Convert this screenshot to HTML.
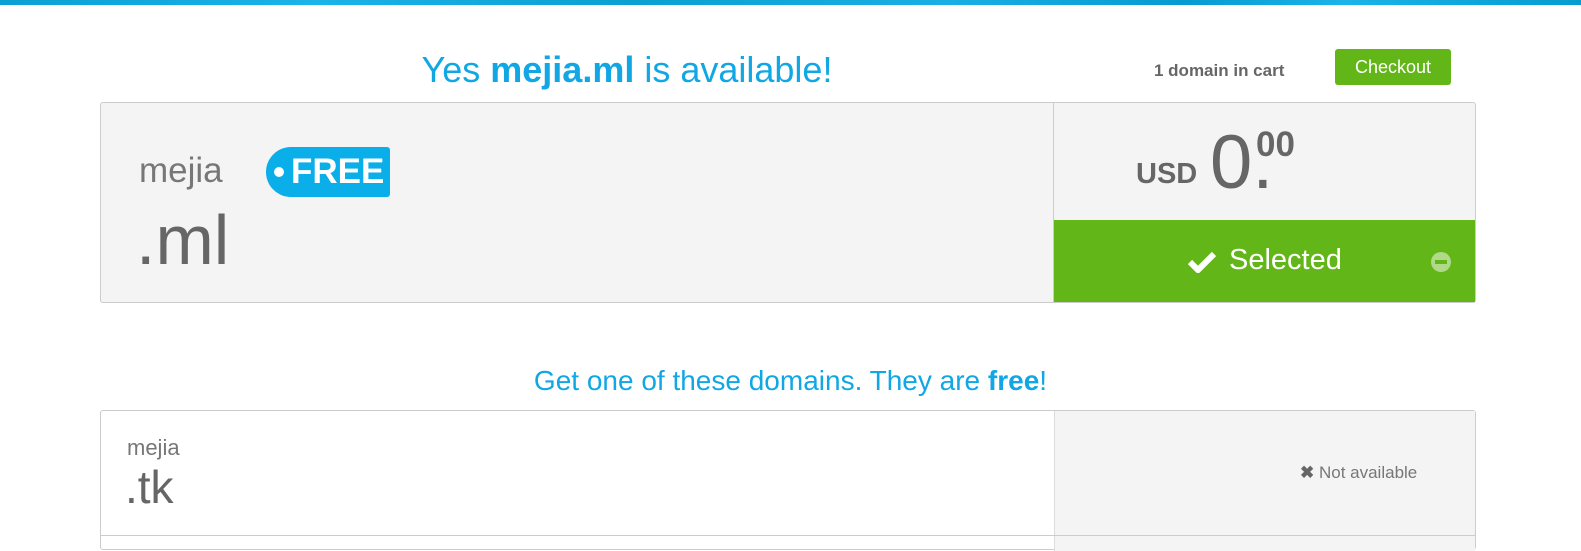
<!DOCTYPE html>
<html><head><meta charset="utf-8"><style>
*{margin:0;padding:0;box-sizing:border-box}
body{width:1581px;height:547px;overflow:hidden;background:#fff;font-family:"Liberation Sans",sans-serif;position:relative}
.bar{position:absolute;left:0;top:0;width:1581px;height:5px;background:linear-gradient(90deg,#0aa0d4,#1ab4e8 20%,#0c9fd2 40%,#1aafe4 60%,#069ad0 75%,#1ab4e8 85%,#059ccf)}
.abs{position:absolute}
.title{left:0;width:1254px;top:49px;text-align:center;font-size:36px;color:#10a7e4}
.cart{left:1154px;top:61px;font-size:17px;color:#666;font-weight:bold}
.chk{left:1335px;top:49px;width:116px;height:36px;background:#62b617;border-radius:3px;color:#fff;font-size:18px;text-align:center;line-height:36px}
.box1{left:100px;top:102px;width:1376px;height:201px;background:#f4f4f4;border:1px solid #ccc;border-radius:3px}
.div1{left:1053px;top:103px;width:1px;height:199px;background:#ccc}
.sel{left:1054px;top:220px;width:421px;height:82px;background:#62b617;color:#fff;font-size:29px}
.box2{left:100px;top:410px;width:1376px;height:140px;border:1px solid #ccc;border-radius:3px;background:#fff}
.g2{left:1054px;top:411px;width:421px;height:140px;background:#f4f4f4;border-left:1px solid #ddd}
.row{left:101px;top:535px;width:1374px;height:1px;background:#ccc}
</style></head><body>
<div class="bar"></div>
<div class="abs title">Yes <b>mejia.ml</b> is available!</div>
<div class="abs cart">1 domain in cart</div>
<div class="abs chk">Checkout</div>
<div class="abs box1"></div>
<div class="abs div1"></div>
<div class="abs" style="left:139px;top:151px;font-size:35px;color:#777">mejia</div>
<div class="abs" style="left:266px;top:147px;width:124px;height:50px;background:#0aaee8;border-radius:25px 3px 3px 25px;color:#fff;font-weight:bold;font-size:35px;line-height:50px;padding-left:25px">FREE</div>
<div class="abs" style="left:274px;top:167px;width:10px;height:10px;border-radius:50%;background:#fff"></div>
<div class="abs" style="left:136px;top:200px;font-size:70px;color:#666">.ml</div>
<div class="abs" style="left:1136px;top:158px;font-size:29px;color:#666;font-weight:bold">USD</div>
<div class="abs" style="left:1210px;top:119px;font-size:76px;color:#666">0.</div>
<div class="abs" style="left:1256px;top:125px;font-size:35px;color:#666;font-weight:bold">00</div>
<div class="abs sel">
<svg class="abs" style="left:134px;top:31px" width="28" height="22" viewBox="0 0 28 22"><path d="M2 11 L10 19 L26 3" stroke="#fff" stroke-width="6" fill="none"/></svg>
<div class="abs" style="left:175px;top:24px">Selected</div>
<div class="abs" style="left:377px;top:32px;width:20px;height:20px;border-radius:50%;background:#b0d98a"></div>
<div class="abs" style="left:381px;top:40px;width:12px;height:4px;background:#62b617"></div>
</div>
<div class="abs" style="left:0;width:1581px;top:365px;text-align:center;font-size:28px;color:#10a7e4">Get one of these domains. They are <b>free</b>!</div>
<div class="abs box2"></div>
<div class="abs g2"></div>
<div class="abs row"></div>
<div class="abs" style="left:127px;top:435px;font-size:22px;color:#777">mejia</div>
<div class="abs" style="left:125px;top:460px;font-size:46px;color:#666">.tk</div>
<div class="abs" style="left:1300px;top:463px;font-size:17px;color:#777"><b style="color:#666">✖</b> Not available</div>
</body></html>
